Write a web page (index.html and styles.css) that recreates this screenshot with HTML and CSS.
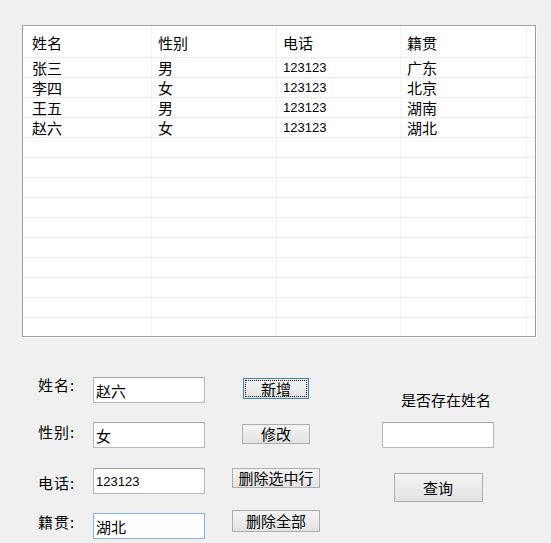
FILE: index.html
```html
<!DOCTYPE html>
<html lang="zh-CN">
<head>
<meta charset="utf-8">
<title>通讯录</title>
<link rel="stylesheet" href="styles.css">
</head>
<body>
<div class="list">
  <div class="row head"><div class="c c1">姓名</div><div class="c">性别</div><div class="c">电话</div><div class="c">籍贯</div><div class="c"></div></div>
  <div class="row"><div class="c c1">张三</div><div class="c">男</div><div class="c num">123123</div><div class="c">广东</div><div class="c"></div></div>
  <div class="row"><div class="c c1">李四</div><div class="c">女</div><div class="c num">123123</div><div class="c">北京</div><div class="c"></div></div>
  <div class="row"><div class="c c1">王五</div><div class="c">男</div><div class="c num">123123</div><div class="c">湖南</div><div class="c"></div></div>
  <div class="row"><div class="c c1">赵六</div><div class="c">女</div><div class="c num">123123</div><div class="c">湖北</div><div class="c"></div></div>
  <div class="row"><div class="c c1"></div><div class="c"></div><div class="c"></div><div class="c"></div><div class="c"></div></div>
  <div class="row"><div class="c c1"></div><div class="c"></div><div class="c"></div><div class="c"></div><div class="c"></div></div>
  <div class="row"><div class="c c1"></div><div class="c"></div><div class="c"></div><div class="c"></div><div class="c"></div></div>
  <div class="row"><div class="c c1"></div><div class="c"></div><div class="c"></div><div class="c"></div><div class="c"></div></div>
  <div class="row"><div class="c c1"></div><div class="c"></div><div class="c"></div><div class="c"></div><div class="c"></div></div>
  <div class="row"><div class="c c1"></div><div class="c"></div><div class="c"></div><div class="c"></div><div class="c"></div></div>
  <div class="row"><div class="c c1"></div><div class="c"></div><div class="c"></div><div class="c"></div><div class="c"></div></div>
  <div class="row"><div class="c c1"></div><div class="c"></div><div class="c"></div><div class="c"></div><div class="c"></div></div>
  <div class="row"><div class="c c1"></div><div class="c"></div><div class="c"></div><div class="c"></div><div class="c"></div></div>
  <div class="row"><div class="c c1"></div><div class="c"></div><div class="c"></div><div class="c"></div><div class="c"></div></div>
</div>

<div class="form">
  <label class="lbl l1">姓名:</label>
  <input class="box b1" type="text" value="赵六">
  <button class="btn btn-add"><span class="focus">新增</span></button>
  <div class="query-lbl">是否存在姓名</div>

  <label class="lbl l2">性别:</label>
  <input class="box b2" type="text" value="女">
  <button class="btn btn-edit">修改</button>
  <input class="box query-box" type="text" value="">

  <label class="lbl l3">电话:</label>
  <input class="box b3 num" type="text" value="123123">
  <button class="btn btn-del">删除选中行</button>
  <button class="btn btn-query">查询</button>

  <label class="lbl l4">籍贯:</label>
  <input class="box b4 focused" type="text" value="湖北">
  <button class="btn btn-clear">删除全部</button>
</div>
</body>
</html>
```

FILE: styles.css
```css
html, body {
  margin: 0;
  background: #f0f0f0;
}

body {
  font-family: "Noto Sans CJK SC", "Liberation Sans", sans-serif;
  font-size: 15px;
  color: #000;
}

/* ---------- list view ---------- */
.list {
  margin: 25px 0 0 22px;
  width: 514px;
  height: 312px;
  box-sizing: border-box;
  border: 1px solid #a0a0a0;
  background: #fff;
  overflow: hidden;
  box-shadow: 1px 1px 0 #ffffff;
}

.row {
  display: grid;
  grid-template-columns: 129px 125px 124px 126px 1fr;
  height: 20px;
  box-sizing: border-box;
  border-bottom: 1px solid #ececec;
}

.c {
  border-right: 1px solid #f3f3f3;
  padding: 0 0 0 6px;
  line-height: 19px;
  white-space: nowrap;
}

.c.c1 {
  padding-left: 9px;
}

.row.head {
  height: 32px;
}

.row.head .c {
  padding-top: 5px;
  line-height: 23px;
}

.num {
  font-family: "Liberation Sans", sans-serif;
  font-size: 13px;
}

/* ---------- form ---------- */
.form {
  margin-top: 39px;
  padding-left: 38px;
  display: grid;
  grid-template-columns: 55px 112px 142px 182px;
  grid-template-rows: 46px 45px 43px 33px;
  align-items: start;
}

.lbl {
  line-height: 18px;
  white-space: nowrap;
  letter-spacing: 1px;
}

.l1 { margin-top: 0; }
.l2 { margin-top: 1px; }
.l3 { margin-top: 7px; }
.l4 { margin-top: 3px; }

.box {
  width: 112px;
  height: 26px;
  box-sizing: border-box;
  margin: 0;
  padding: 0 2px;
  border: 1px solid #b5b7bd;
  border-top-color: #a3a5ab;
  background: #fff;
  font-family: "Noto Sans CJK SC", sans-serif;
  font-size: 15px;
  color: #000;
  outline: none;
}

.box.num {
  font-family: "Liberation Sans", sans-serif;
  font-size: 13px;
}

.b1 { margin-top: 1px; }
.b2 { margin-top: 0; }
.b3 { margin-top: 1px; }
.b4 { margin-top: 3px; }

.box.focused {
  border-color: #7eb4ea;
}

.btn {
  justify-self: center;
  margin: 0;
  padding: 0;
  box-sizing: border-box;
  border: 1px solid #adadad;
  background: linear-gradient(#f4f4f4, #e2e2e2);
  font-family: "Noto Sans CJK SC", sans-serif;
  font-size: 15px;
  line-height: 18px;
  color: #000;
}

.btn-add {
  width: 66px;
  height: 21px;
  margin-top: 2px;
  border-color: #3c7fb1;
  padding: 1px;
}

.btn-add .focus {
  display: block;
  height: 100%;
  box-sizing: border-box;
  border: 1px dotted #000;
  line-height: 15px;
}

.btn-edit {
  width: 68px;
  height: 20px;
  margin-top: 2px;
}

.btn-del {
  width: 88px;
  height: 20px;
  margin-top: 1px;
}

.btn-clear {
  width: 88px;
  height: 22px;
  margin-top: 0;
}

.query-lbl {
  justify-self: center;
  margin: 14px 0 0 16px;
  line-height: 20px;
  white-space: nowrap;
}

.query-box {
  justify-self: center;
  margin-top: 0;
}

.btn-query {
  width: 89px;
  height: 29px;
  margin-top: 6px;
}
```
